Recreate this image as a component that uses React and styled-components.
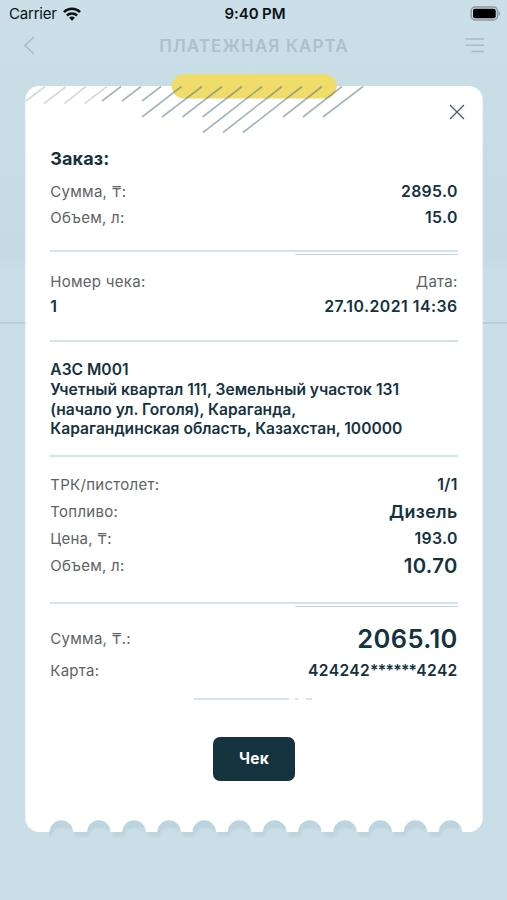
import React from 'react';
import styled, {createGlobalStyle} from 'styled-components';


const GlobalStyle = createGlobalStyle`
    * {
        box-sizing: border-box;
    }
    body {
        margin: 0;
        font-family: Inter, "Noto Sans", sans-serif;
        background-color: #c9dee6;
    }
`;
const Screen = styled.div`
    position: relative;
    height: 900px;
    overflow: hidden;
    background: linear-gradient(180deg, #cadfe7 0, #c9dde7 90px, #c6dae6 258px, #c9dee7 270px, #c9dee6 100%);
`;
const BackLine = styled.div`
    position: absolute;
    top: 322px;
    left: 0;
    width: 100%;
    height: 2px;
    background-color: #b8ced7;
`;
const StatusBar = styled.div`
    display: grid;
    grid-template-columns: 1fr auto 1fr;
    align-items: center;
    height: 27px;
    padding: 0 6px 0 9px;
    font-size: 15px;
    color: #0c1215;
`;
const Carrier = styled.div`
    display: flex;
    align-items: center;
    gap: 6px;
    letter-spacing: -0.2px;
`;
const Time = styled.div`
    font-weight: 600;
    letter-spacing: -0.1px;
`;
const BatteryIcon = styled.svg`
    justify-self: end;
`;
const NavBar = styled.div`
    display: flex;
    align-items: center;
    justify-content: space-between;
    height: 37px;
    padding: 0 23px 0 23px;
`;
const NavTitle = styled.div`
    padding-left: 6px;
    font-size: 17px;
    font-weight: 600;
    letter-spacing: 1.1px;
    color: #adc0cc;
`;
const Sheet = styled.div`
    position: relative;
    width: 457.4px;
    height: 746px;
    margin: 22px 0 0 25.3px;
    padding: 62px 25px 0;
`;
const Paper = styled.svg`
    position: absolute;
    top: -14px;
    left: -0.3px;
    overflow: visible;
`;
const Content = styled.div`
    position: relative;
    display: flex;
    flex-direction: column;
`;
const Close = styled.button`
    position: absolute;
    top: 18px;
    right: 18px;
    display: flex;
    padding: 0;
    border: none;
    background: none;
`;
const Title = styled.div`
    height: 31px;
    font-size: 18px;
    font-weight: 700;
    line-height: 22px;
    letter-spacing: 0.1px;
    color: #15323f;
`;
const Row = styled.div`
    display: flex;
    align-items: center;
    justify-content: space-between;
    height: ${({$height}) => $height || 25.5}px;
`;
const Label = styled.span`
    font-size: 15px;
    letter-spacing: 0.28px;
    color: #606264;
`;
const Value = styled.span`
    font-size: ${({$size}) => $size || 15.8}px;
    font-weight: 600;
    letter-spacing: ${({$spacing}) => $spacing || 0.35}px;
    color: #15323f;
`;
const Mask = styled.span`
    letter-spacing: -0.7px;
`;
const Divider = styled.div`
    position: relative;
    height: 2px;
    margin: ${({$margin}) => $margin};
    background-color: #d3e3eb;
    &::after {
        content: '';
        display: ${({$double}) => $double ? 'block' : 'none'};
        position: absolute;
        right: 0;
        top: 4px;
        width: 163px;
        height: 1px;
        background-color: #bfd6df;
    }
`;
const Address = styled.div`
    font-size: 15.6px;
    font-weight: 600;
    line-height: 19.8px;
    color: #15323f;
    white-space: pre;
`;
const ShortLine = styled.div`
    display: flex;
    gap: 6px;
    margin: 13px 0 0 144px;
    span {
        height: 2px;
        width: 3px;
        background-color: #d3e3eb;
    }
    span:first-child {
        width: 95px;
    }
    span:last-child {
        width: 6px;
        margin-left: 2px;
    }
`;
const CheckButton = styled.button`
    align-self: center;
    width: 82.5px;
    height: 43.5px;
    margin-top: 37px;
    padding: 0;
    border: none;
    border-radius: 7px;
    background-color: #15323f;
    font-family: inherit;
    font-size: 15.5px;
    font-weight: 700;
    letter-spacing: 0.3px;
    color: #fff;
`;

const holes = [61.3, 98.8, 134, 169.1, 204.3, 239.4, 274.7, 309.8, 345, 380.2, 415.4, 450.5].map((x) => x - 25);

const lightStripes = [[1, 15, 20, 0.5], [19, 17.5, 41, 0.5], [39.5, 17.5, 61, 0.5], [59.5, 17.5, 82, 0.5]];
const darkStripes = [
    [77, 15, 96, 0.5], [97, 15, 116, 0.5], [117, 15, 136, 0.5],
    [117, 31, 156.5, 0.5], [137, 31, 177, 0.5], [157.5, 31, 197, 0.5], [177.5, 31, 217, 0.5],
    [178, 46.5, 237, 0.5], [198, 46.5, 257, 0.5], [218, 46.5, 277, 0.5],
    [258, 31, 297, 0.5], [278, 31, 317, 0.5], [298, 31, 338, 0.5]
];

const sheetPath = () => {
    const bites = [...holes].reverse().map((x) => `H${x + 11.7}A11.7 11.7 0 0 0 ${x - 11.7} 746`).join('');
    return `M14 0H443.7A14 14 0 0 1 457.7 14V732A14 14 0 0 1 443.7 746${bites}H14A14 14 0 0 1 0.3 732V14A14 14 0 0 1 14 0Z`;
}

const Stripes = ({items, color}) => {
    return (
        <g stroke={color} strokeWidth="1.6">
            {
                items.map(([x1, y1, x2, y2]) => (
                    <line key={`${x1}-${y1}`} x1={x1} y1={y1} x2={x2} y2={y2}/>
                ))
            }
        </g>
    )
}

const Receipt = () => {
    return (
        <Paper width="458" height="770" viewBox="0 -14 458 770">
            <defs>
                <clipPath id="tear">
                    <rect x="24" y="730" width="410" height="30"/>
                </clipPath>
                <filter id="soft" x="-5%" y="-5%" width="110%" height="110%">
                    <feGaussianBlur stdDeviation="0.8"/>
                </filter>
            </defs>
            <g clipPath="url(#tear)">
                <path d={sheetPath()} transform="translate(2.5 4.5)" fill="#bdd4de" filter="url(#soft)"/>
                {
                    holes.map((x) => (
                        <path key={x} d={`M${x - 11.7} 746A11.7 11.7 0 0 1 ${x + 11.7} 746Q${x + 7} 742 ${x + 1} 742Q${x - 7} 742 ${x - 11.7} 746Z`} fill="#bdd4de" filter="url(#soft)"/>
                    ))
                }
            </g>
            <path d={sheetPath()} fill="#fff"/>
            <rect x="146.7" y="-12" width="165" height="24.5" rx="12.2" fill="#f0dc6b"/>
            <Stripes items={lightStripes} color="#d3dcdf"/>
            <Stripes items={darkStripes} color="rgba(67, 103, 126, 0.48)"/>
        </Paper>
    )
}

const Field = ({label, value, height, size, spacing}) => {
    return (
        <Row $height={height}>
            <Label>{label}</Label>
            <Value $size={size} $spacing={spacing}>{value}</Value>
        </Row>
    )
}

export default function App() {
    return (
        <Screen>
            <GlobalStyle/>
            <BackLine/>
            <StatusBar>
                <Carrier>
                    Carrier
                    <svg width="18" height="14" viewBox="0 0 18 14" fill="none" stroke="#0c1215" strokeWidth="2.5">
                        <path d="M0.9 5.1C5.4 0.6 12.6 0.6 17.1 5.1"/>
                        <path d="M3.9 8.5C6.7 5.7 11.3 5.7 14.1 8.5"/>
                        <path d="M9 13.7L6.1 10.8C7.7 9.2 10.3 9.2 11.9 10.8Z" fill="#0c1215" stroke="none"/>
                    </svg>
                </Carrier>
                <Time>9:40 PM</Time>
                <BatteryIcon width="31" height="15" viewBox="0 0 31 15">
                    <rect x="1.2" y="1" width="26.3" height="13" rx="4" fill="none" stroke="#8b999f" strokeWidth="1.5"/>
                    <rect x="3" y="2.8" width="22.7" height="9.4" rx="2" fill="#000"/>
                    <path d="M28.7 5.2C30.5 5.8 30.5 9.2 28.7 9.8Z" fill="#8b999f"/>
                </BatteryIcon>
            </StatusBar>
            <NavBar>
                <svg width="14" height="19" viewBox="0 0 14 19" fill="none" stroke="#a9bbc4" strokeWidth="1.6">
                    <path d="M11 1L2 9.5L11 18"/>
                </svg>
                <NavTitle>ПЛАТЕЖНАЯ КАРТА</NavTitle>
                <svg width="19" height="15" viewBox="0 0 19 15" stroke="#a9bbc4" strokeWidth="1.5">
                    <path d="M0.5 1H19M0.5 7.2H19M6.5 13.5H19"/>
                </svg>
            </NavBar>
            <Sheet>
                <Receipt/>
                <Close aria-label="Закрыть">
                    <svg width="16" height="16" viewBox="0 0 16 16" stroke="#49606b" strokeWidth="1.4">
                        <path d="M1 1L15 15M15 1L1 15"/>
                    </svg>
                </Close>
                <Content>
                    <Title>Заказ:</Title>
                    <Field label="Сумма, ₸:" value="2895.0"/>
                    <Field label="Объем, л:" value="15.0"/>
                    <Divider $margin="20px 0 17px" $double/>
                    <Row>
                        <Label>Номер чека:</Label>
                        <Label>Дата:</Label>
                    </Row>
                    <Row $height={24}>
                        <Value>1</Value>
                        <Value $spacing={0.5}>27.10.2021 14:36</Value>
                    </Row>
                    <Divider $margin="21px 0 18.6px"/>
                    <Address>{'АЗС М001\nУчетный квартал 111, Земельный участок 131\n(начало ул. Гоголя), Караганда,\nКарагандинская область, Казахстан, 100000'}</Address>
                    <Divider $margin="15.4px 0 15px"/>
                    <Field label="ТРК/пистолет:" value="1/1" height={26}/>
                    <Field label="Топливо:" value="Дизель" height={27} size={17.8}/>
                    <Field label="Цена, ₸:" value="193.0" height={27}/>
                    <Field label="Объем, л:" value="10.70" height={28.5} size={20.3}/>
                    <Divider $margin="22px 0 17px" $double/>
                    <Field label="Сумма, ₸.:" value="2065.10" height={34} size={25.5}/>
                    <Field label="Карта:" value={<>424242<Mask>******</Mask>4242</>} height={30} size={15.6}/>
                    <ShortLine><span/><span/><span/></ShortLine>
                    <CheckButton>Чек</CheckButton>
                </Content>
            </Sheet>
        </Screen>
    );
}
